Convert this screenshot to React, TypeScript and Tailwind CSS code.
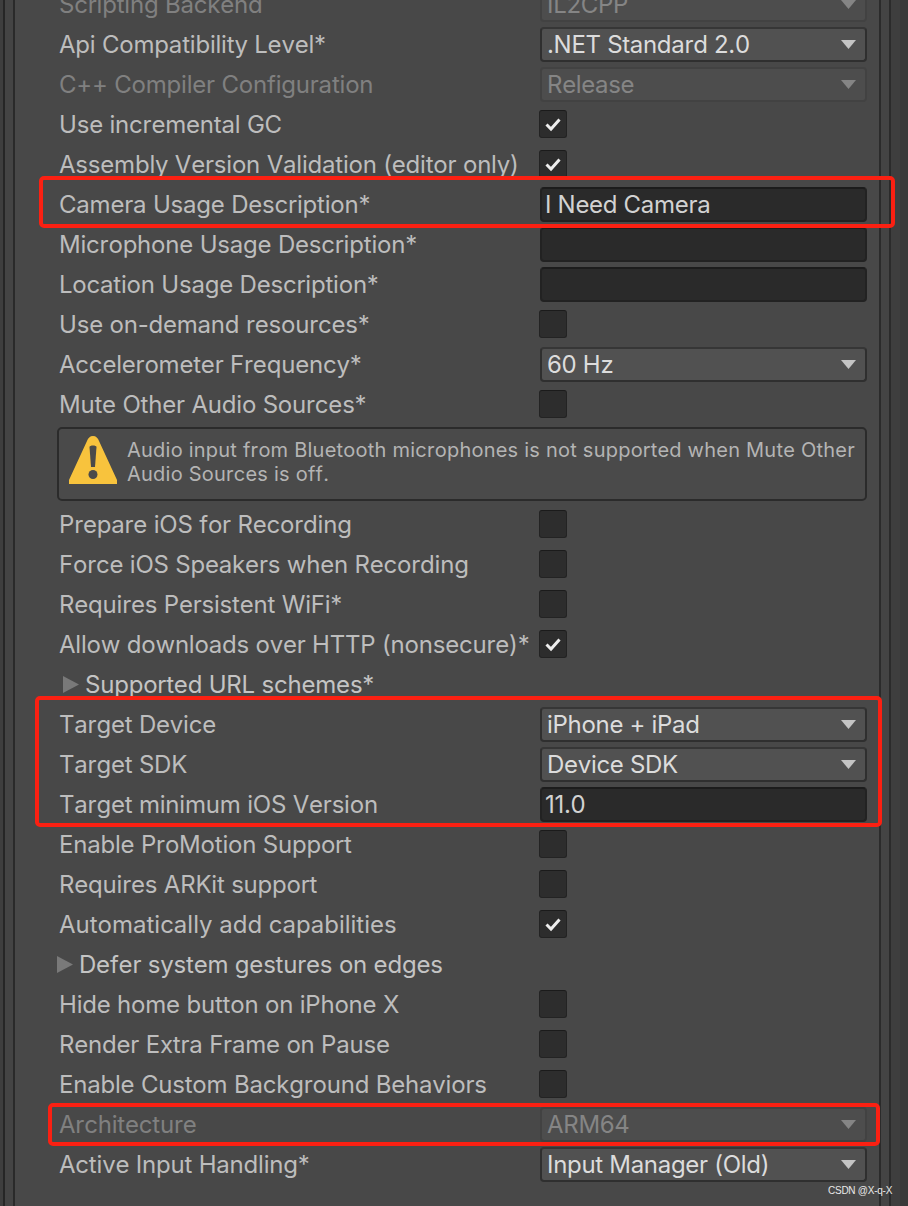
import type { ReactNode } from 'react'

type Control =
  | { kind: 'select'; value: string; disabled?: boolean }
  | { kind: 'input'; value?: string }
  | { kind: 'check'; checked?: boolean }

function Check({ checked }: { checked?: boolean }) {
  return (
    <div className="ml-[-1px] flex h-[28px] w-[28px] items-center justify-center rounded-[3px] border border-[#232323] border-t-[#1b1b1b] bg-[#2d2d2d]">
      {checked && (
        <svg width="20" height="20" viewBox="0 0 20 20" fill="none">
          <path d="M3.5 10.5 L8 15 L16.5 5.5" stroke="#eeeeee" strokeWidth="3" />
        </svg>
      )}
    </div>
  )
}

function Select({ value, disabled }: { value: string; disabled?: boolean }) {
  return (
    <div
      className={
        disabled
          ? 'flex h-[35px] items-center justify-between rounded-[4px] border-2 border-[#424242] bg-[#4d4d4d] pl-[5px] pr-[9px] tracking-[-0.3px] text-[#858585]'
          : 'flex h-[35px] items-center justify-between rounded-[4px] border-2 border-[#2f2f2f] border-t-[#363636] bg-[#515151] pl-[5px] pr-[9px] tracking-[-0.3px] text-[#dcdcdc]'
      }
    >
      <span className="pt-[1px]">{value}</span>
      <svg width="15" height="9" viewBox="0 0 15 9">
        <path d="M0 0 H15 L7.5 9 Z" fill={disabled ? '#858585' : '#c4c4c4'} />
      </svg>
    </div>
  )
}

function TextInput({ value }: { value?: string }) {
  return (
    <div className="flex h-[35px] items-center rounded-[4px] border-2 border-[#222222] border-t-[#1c1c1c] bg-[#2a2a2a] pl-[3px] pt-[1px] tracking-[-0.3px] text-[#d2d2d2]">
      {value}
    </div>
  )
}

function Row({ label, muted, control, wide }: { label: string; muted?: boolean; control?: Control; wide?: boolean }) {
  let right: ReactNode = null
  if (control?.kind === 'select') right = <Select value={control.value} disabled={control.disabled} />
  if (control?.kind === 'input') right = <TextInput value={control.value} />
  if (control?.kind === 'check') right = <Check checked={control.checked} />
  return (
    <div className="flex h-[40px] items-center">
      <div className={`w-[481px] shrink-0 whitespace-nowrap pt-[2px] ${muted ? 'text-[#808080]' : 'text-[#bdbdbd]'} ${wide ? 'tracking-[0px]' : ''}`}>
        {label}
      </div>
      <div className="w-[327px] shrink-0">{right}</div>
    </div>
  )
}

function Foldout({ label, indent }: { label: string; indent: string }) {
  return (
    <div className={`flex h-[40px] items-center ${indent}`}>
      <svg width="16" height="17" viewBox="0 0 16 17" className="mr-[6px] shrink-0">
        <path d="M0 0 L16 8.5 L0 17 Z" fill="#797979" />
      </svg>
      <span className="whitespace-nowrap pt-[2px] text-[#c4c4c4]">{label}</span>
    </div>
  )
}

function RedBox({ className }: { className: string }) {
  return <div className={`absolute rounded-[5px] border-[4px] border-[#fb2012] ${className}`} />
}

export default function App() {
  return (
    <div
      className="relative flex h-[1206px] w-[908px] overflow-hidden bg-[#484848] text-[24px] leading-[28px] tracking-[-0.2px] [font-kerning:none]"
      style={{ fontFamily: 'Inter, "Liberation Sans", sans-serif' }}
    >
      <div className="flex shrink-0">
        <div className="w-[3px] bg-[#3e3e3e]" />
        <div className="w-[2px] bg-[#262626]" />
        <div className="w-[8px] bg-[#444444]" />
        <div className="w-[2px] bg-[#2a2a2a]" />
      </div>

      <div className="mt-[-16px] w-[852px] shrink-0 pl-[44px]">
        <Row label="Scripting Backend" muted control={{ kind: 'select', value: 'IL2CPP', disabled: true }} />
        <Row label="Api Compatibility Level*" control={{ kind: 'select', value: '.NET Standard 2.0' }} />
        <Row label="C++ Compiler Configuration" muted control={{ kind: 'select', value: 'Release', disabled: true }} />
        <Row label="Use incremental GC" control={{ kind: 'check', checked: true }} />
        <Row label="Assembly Version Validation (editor only)" control={{ kind: 'check', checked: true }} />
        <Row label="Camera Usage Description*" control={{ kind: 'input', value: 'I Need Camera' }} />
        <Row label="Microphone Usage Description*" control={{ kind: 'input' }} />
        <Row label="Location Usage Description*" control={{ kind: 'input' }} />
        <Row label="Use on-demand resources*" control={{ kind: 'check' }} />
        <Row label="Accelerometer Frequency*" control={{ kind: 'select', value: '60 Hz' }} />
        <Row label="Mute Other Audio Sources*" control={{ kind: 'check' }} />

        <div className="my-[3px] ml-[-2px] flex h-[74px] w-[810px] items-center rounded-[5px] border-2 border-[#2b2b2b] bg-[#4a4a4a] pl-[10px] pr-[8px]">
          <svg width="48" height="48" viewBox="0 0 48 48" className="mb-[8px] mr-[10px] shrink-0">
            <path d="M24 0 C27 0 29 2 30 5 L48 44 V48 H0 V44 L18 5 C19 2 21 0 24 0 Z" fill="#f8c33d" />
            <path d="M20.5 11 C20.5 9 27.5 9 27.5 11 L26 31 H22 Z" fill="#4a4a4a" />
            <circle cx="24" cy="38.5" r="4.5" fill="#4a4a4a" />
          </svg>
          <p className="mb-[4px] text-[20px] leading-[24px] tracking-[0.23px] text-[#b4b4b4]">
            Audio input from Bluetooth microphones is not supported when Mute Other Audio Sources is off.
          </p>
        </div>

        <Row label="Prepare iOS for Recording" control={{ kind: 'check' }} />
        <Row label="Force iOS Speakers when Recording" control={{ kind: 'check' }} />
        <Row label="Requires Persistent WiFi*" control={{ kind: 'check' }} />
        <Row label="Allow downloads over HTTP (nonsecure)*" control={{ kind: 'check', checked: true }} />
        <Foldout label="Supported URL schemes*" indent="pl-[4px]" />
        <Row label="Target Device" control={{ kind: 'select', value: 'iPhone + iPad' }} />
        <Row label="Target SDK" control={{ kind: 'select', value: 'Device SDK' }} />
        <Row label="Target minimum iOS Version" control={{ kind: 'input', value: '11.0' }} />
        <Row label="Enable ProMotion Support" control={{ kind: 'check' }} />
        <Row label="Requires ARKit support" control={{ kind: 'check' }} />
        <Row label="Automatically add capabilities" wide control={{ kind: 'check', checked: true }} />
        <Foldout label="Defer system gestures on edges" indent="ml-[-2px]" />
        <Row label="Hide home button on iPhone X" control={{ kind: 'check' }} />
        <Row label="Render Extra Frame on Pause" control={{ kind: 'check' }} />
        <Row label="Enable Custom Background Behaviors" control={{ kind: 'check' }} />
        <Row label="Architecture" muted control={{ kind: 'select', value: 'ARM64', disabled: true }} />
        <Row label="Active Input Handling*" control={{ kind: 'select', value: 'Input Manager (Old)' }} />
      </div>

      {/* right edge strips */}
      <div className="absolute bottom-0 right-0 top-0 flex">
        <div className="w-[2px] bg-[#2b2b2b]" />
        <div className="w-[8px] bg-[#444444]" />
        <div className="w-[2px] bg-[#2b2b2b]" />
        <div className="w-[9px] bg-[#3e3e3e]" />
        <div className="w-[8px] bg-[#393939]" />
      </div>

      <RedBox className="left-[39px] top-[176px] h-[52px] w-[856px]" />
      <RedBox className="left-[35px] top-[696px] h-[131px] w-[847px]" />
      <RedBox className="left-[48px] top-[1103px] h-[43px] w-[832px]" />

      <div className="absolute left-[828px] top-[1185px] whitespace-nowrap text-[10px] leading-[12px] tracking-[-0.25px] text-[#e8e8e8]" style={{ fontFamily: '"Liberation Sans", sans-serif' }}>
        CSDN @X-q-X
      </div>
    </div>
  )
}
